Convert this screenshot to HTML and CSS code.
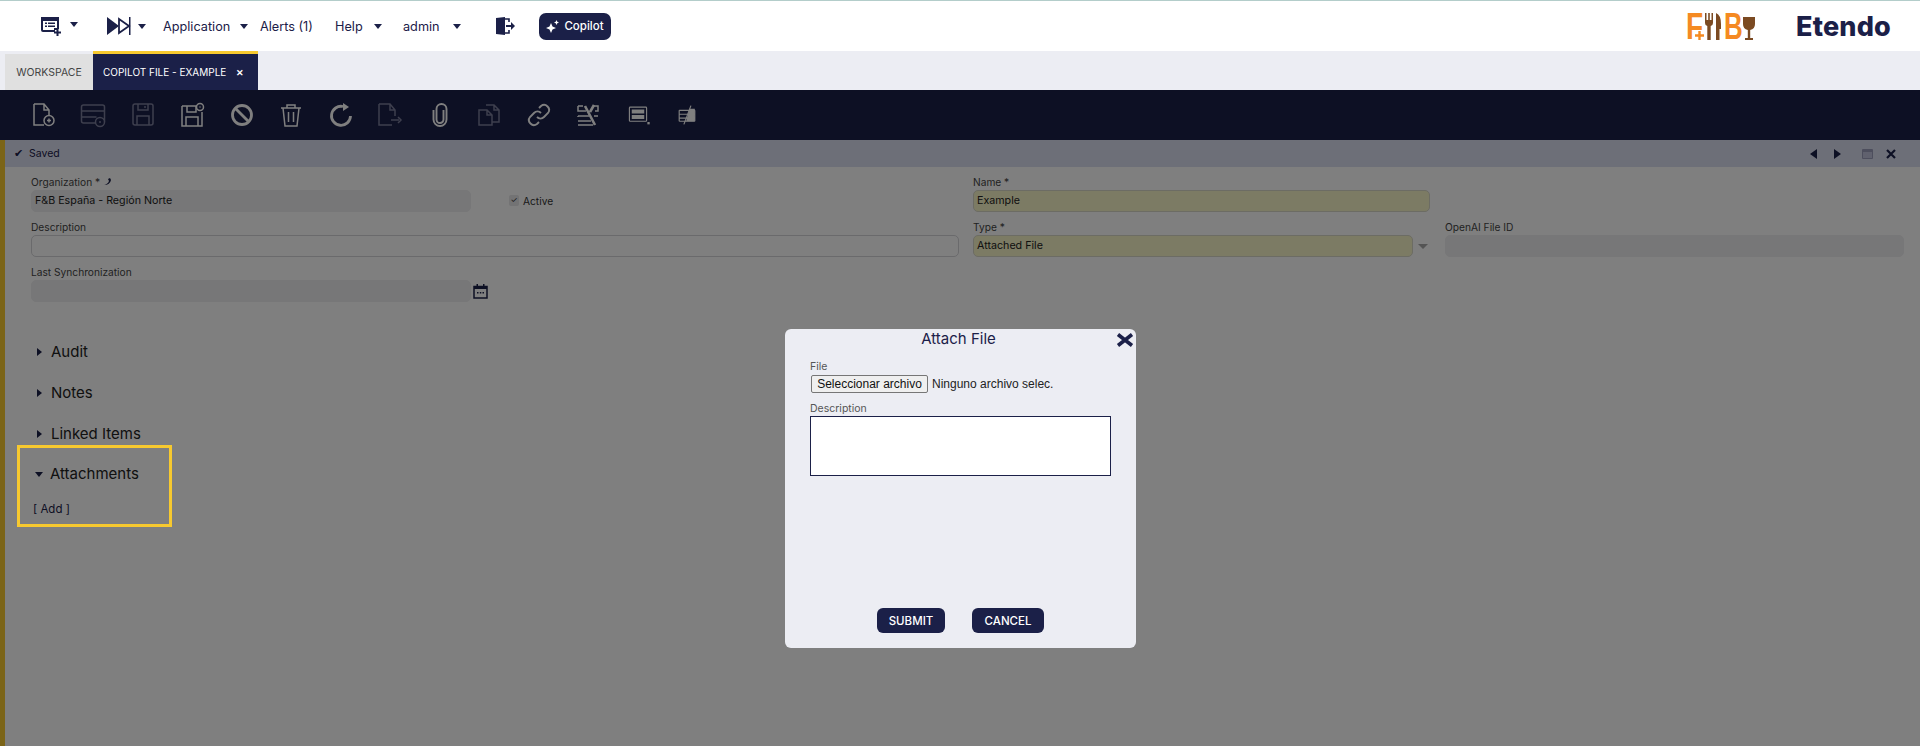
FILE: index.html

```html
<!DOCTYPE html>
<html lang="en">
<head>
  <meta charset="UTF-8">
  <title>Etendo</title>
  <link rel="stylesheet" href="styles.css">
</head>
<body>
  <header class="navbar">
    <div class="nav-left">
      <svg class="nav-icon" width="20" height="20" viewBox="0 0 20 20"><path fill="#1b2048" d="M0 1h18v12h-2v1h-2v2H2a2 2 0 0 1-2-2z"/><path fill="#fff" d="M2 5h14v7h-3v2H2z"/><path fill="#1b2048" d="M4 6.500h2v1.500H4zM7 6.500h7v1.500H7zM4 9.500h2V11H4zM7 9.500h7V11H7zM15.500 13h2v2.500H20v2h-2.500V20h-2v-2.500H13v-2h2.500z"/></svg>
      <span class="caret caret-a"></span>
      <svg class="nav-icon skip" width="24" height="18" viewBox="0 0 24 18"><path fill="#1b2048" d="M0 0l12 9-12 9z"/><path fill="none" stroke="#1b2048" stroke-width="1.800" d="M12 2l10 7-10 7z"/><path fill="#1b2048" d="M22 0h1.500v18H22z"/></svg>
      <span class="caret caret-b"></span>
      <a class="nav-link app">Application</a><span class="caret caret-c"></span>
      <a class="nav-link alerts">Alerts (1)</a>
      <a class="nav-link help">Help</a><span class="caret caret-d"></span>
      <a class="nav-link admin">admin</a><span class="caret caret-e"></span>
      <svg class="exit" width="19" height="18" viewBox="0 0 19 18"><path fill="#1b2048" d="M0 1l9-1v18l-9-1z"/><path fill="none" stroke="#1b2048" stroke-width="1.600" d="M9 2h4v3M13 13v3H9"/><path fill="#1b2048" d="M10 8h5V5l4 4-4 4v-3h-5z"/></svg>
      <button class="copilot">
        <svg width="13" height="13" viewBox="0 0 13 13"><path fill="#fff" d="M5 3l1.500 3.500L10 8 6.500 9.500 5 13 3.500 9.500 0 8l3.500-1.500zM10.500 0l.8 1.700L13 2.500l-1.700.8-.8 1.700-.8-1.700L8 2.500l1.700-.8z"/></svg>
        Copilot
      </button>
    </div>
    <div class="nav-right">
      <div class="fb-logo">
        <span class="fb-letter fb-f">F</span>
        <svg class="fb-plus" width="9" height="9" viewBox="0 0 9 9"><path fill="#f58a22" d="M3.300 0h2.400v3.300H9v2.400H5.700V9H3.300V5.700H0V3.300h3.300z"/></svg>
        <svg class="fb-cutlery" width="16" height="27" viewBox="0 0 16 27"><path fill="#7b4a22" d="M0 0h1.500v7H3.200V0h1.600v7h1.700V0H8v10q0 2.500-2.300 3V27H2.300V13Q0 12.500 0 10zM11 0q5 2 5 11v5h-1.500v11H11z"/></svg>
        <span class="fb-letter fb-b">B</span>
        <svg class="fb-glass" width="12" height="23" viewBox="0 0 12 23"><path fill="#7b4a22" d="M0 0h12v7q0 5-4.800 6v8H10v2H2v-2h2.800v-8Q0 12 0 7z"/></svg>
      </div>
      <div class="etendo">Etendo</div>
    </div>
  </header>

  <nav class="tabs">
    <div class="tab">WORKSPACE</div>
    <div class="tab active">COPILOT FILE - EXAMPLE <span class="tab-close">&#10005;</span></div>
  </nav>

  <main class="main">
    <div class="toolbar">
      <svg class="tb on" viewBox="0 0 24 24"><path d="M2 1h10l5 6v6M2 1v21h10M12 1v6h5"/><circle cx="17" cy="17.500" r="5"/><path d="M17 15.500v4M15 17.500h4"/></svg>
      <svg class="tb off" viewBox="0 0 24 24"><rect x=".5" y="2" width="23" height="18" rx="2"/><path d="M.5 8h23M.5 14h15"/><circle class="cut" cx="19" cy="19" r="4.500"/><path d="M18 19h2"/></svg>
      <svg class="tb off" viewBox="0 0 24 24"><rect x="2" y="1" width="20" height="21" rx="2"/><path d="M7 1v6h10V1M14 3v2M6 22v-9h12v9"/></svg>
      <svg class="tb on" viewBox="0 0 24 24"><path d="M2 3h15M2 3v20h20V9M7 3v6h9V3M6 23v-9h12v9"/><circle cx="20" cy="4" r="3.500"/><path d="M19.500 4h1"/></svg>
      <svg class="tb on thick" viewBox="0 0 24 24"><circle cx="12" cy="12" r="9.500"/><path d="M5.500 5.500l13 13"/></svg>
      <svg class="tb on" viewBox="0 0 24 24"><path d="M2 5h20M8 5V2h8v3M4 5l2 18h12l2-18M9.500 9v10M14.500 9v10"/></svg>
      <svg class="tb on thick" viewBox="0 0 24 24"><path d="M14 3.500A9.500 9.500 0 1 0 21.500 13"/><path class="solid" d="M14 0l6 4-6 4z"/></svg>
      <svg class="tb off" viewBox="0 0 24 24"><path d="M1 1h11l5 6v6M1 1v21h13M12 1v6h5M13 17h8M20 14l3 3-3 3"/></svg>
      <svg class="tb on wide" viewBox="0 0 24 24"><path d="M15.500 7v9.500a3.500 3.500 0 0 1-7 0V6a5 5 0 0 1 10 0v10.500a6.500 6.500 0 0 1-13 0V7"/></svg>
      <svg class="tb off" viewBox="0 0 24 24"><path d="M9 2h8l5 5v12h-7M17 2v5h5M2 7h8l5 5v10H2zM10 7v5h5"/></svg>
      <svg class="tb on wide" viewBox="0 0 24 24"><path d="M10 14a5 5 0 0 0 7 0l4-4a5 5 0 0 0-7-7l-2 2M14 10a5 5 0 0 0-7 0l-4 4a5 5 0 0 0 7 7l2-2"/></svg>
      <svg class="tb on" viewBox="0 0 24 24"><path d="M2 3h5M17 3h5v5h-3M2 3v5h8M2 13h11M18 13h4M2 13v1M2 18h13M2 22h15"/><path class="heavy" d="M9 3l10 19M18 2l-4 7"/></svg>
      <svg class="tb on small" viewBox="0 0 24 24"><rect x="1" y="2" width="22" height="18" rx="1"/><path class="solid" d="M4 5h16v5H4zM4 12h16v5H4z"/><path class="solid" d="M24 21h3v3h-3z"/></svg>
      <svg class="tb on small" viewBox="0 0 24 24"><path d="M2 6h20M2 11h20M2 16h20M2 20h20M2 6v14M22 6v14"/><path class="solid" d="M15 4h7v16h-11z"/><path d="M17 0L8 24"/></svg>
    </div>

    <div class="status">
      <div class="status-left"><span class="check">&#10004;</span> Saved</div>
      <div class="status-right">
        <span class="tri-left"></span>
        <span class="tri-right"></span>
        <svg class="win" width="11" height="10" viewBox="0 0 11 10"><rect width="11" height="10" rx="1" fill="#9a9dbb"/><rect x="1" y="3" width="9" height="6" fill="#c0c3dc"/></svg>
        <svg class="cls" width="10" height="10" viewBox="0 0 10 10"><path d="M1 1l8 8M9 1l-8 8" stroke="#1b2048" stroke-width="2.200"/></svg>
      </div>
    </div>

    <div class="form">
      <div class="form-grid">
        <div class="field col-org">
          <label>Organization * <svg width="8" height="9" viewBox="0 0 8 9"><path d="M1 8q4-1 5-4L5 2l2-1 1 2q-1 5-7 5z" fill="#1b2048"/></svg></label>
          <div class="input grey">F&amp;B España - Región Norte</div>
        </div>
        <div class="active-box"><span class="checkbox">&#10003;</span> Active</div>
        <div class="field col-name">
          <label>Name *</label>
          <div class="input required">Example</div>
        </div>
        <div class="field col-desc">
          <label>Description</label>
          <div class="input"></div>
        </div>
        <div class="field col-type">
          <label>Type *</label>
          <div class="type-row">
            <div class="input required">Attached File</div>
            <span class="select-caret"></span>
          </div>
        </div>
        <div class="field col-openai">
          <label>OpenAI File ID</label>
          <div class="input grey"></div>
        </div>
        <div class="field col-org">
          <label>Last Synchronization</label>
          <div class="date-row">
            <div class="input grey"></div>
            <svg width="15" height="16" viewBox="0 0 15 16"><path fill="none" stroke="#1b2048" stroke-width="1.500" d="M1 3.500h13V15H1z"/><path fill="#1b2048" d="M1 3h13v3H1zM3.500 1h1.500v3H3.500zM10 1h1.500v3H10zM4 9h1.500v1.500H4zM6.800 9h1.500v1.500H6.800zM9.500 9H11v1.500H9.500z"/></svg>
          </div>
        </div>
      </div>

      <section class="sections">
        <div class="section"><span class="arrow"></span>Audit</div>
        <div class="section"><span class="arrow"></span>Notes</div>
        <div class="section"><span class="arrow"></span>Linked Items</div>
        <div class="section open"><span class="arrow down"></span>Attachments</div>
        <a class="add-link">[ Add ]</a>
      </section>
    </div>

    <div class="overlay"></div>

    <!-- marker drawn over the dim layer -->
    <div class="highlight"></div>

    <div class="modal">
      <h3 class="modal-title">Attach File</h3>
      <svg class="modal-close" width="18" height="14" viewBox="0 0 18 14"><path d="M2 1.500l14 11M16 1.500l-14 11" stroke="#1b2048" stroke-width="3.600"/></svg>
      <label class="modal-label">File</label>
      <div class="file-row"><button class="file-btn">Seleccionar archivo</button><span>Ninguno archivo selec.</span></div>
      <label class="modal-label desc">Description</label>
      <div class="textarea"></div>
      <div class="modal-actions">
        <button class="btn submit">SUBMIT</button>
        <button class="btn cancel">CANCEL</button>
      </div>
    </div>
  </main>
</body>
</html>
```

FILE: styles.css

```css
* { box-sizing: border-box; }
html, body { margin: 0; height: 100%; }
body { font-family: Inter, "Open Sans", sans-serif; color: #1b2048; background: #fff; overflow: hidden; }

.navbar { height: 51px; border-top: 1px solid #b3cdca; display: flex; justify-content: space-between; align-items: center; background: #fff; }
.nav-left { display: flex; align-items: center; padding-left: 41px; }
.nav-link { font-size: 12.700px; white-space: nowrap; }
.caret { border: 4px solid transparent; border-top: 5px solid #1b2048; border-bottom: 0; width: 0; height: 0; }
.caret-a { margin-left: 9px; margin-top: -3px; }
.caret-b { margin-left: 7px; }
.caret-c { margin-left: 11px; }
.caret-d { margin-left: 12px; }
.caret-e { margin-left: 9px; }
.skip { margin-left: 29px; }
.app { margin-left: 17px; width: 66px; }
.alerts { margin-left: 12px; width: 54px; }
.help { margin-left: 21px; width: 27px; }
.admin { margin-left: 21px; width: 41px; }
.exit { margin-left: 35px; }
.copilot { margin-left: 24px; width: 72px; height: 27px; background: #1b2048; color: #fff; border: 0; border-radius: 7px; font: 500 11.500px Inter, sans-serif; display: flex; align-items: center; justify-content: center; gap: 5px; padding: 0; }

.nav-right { display: flex; align-items: center; padding-right: 29px; }
.fb-logo { display: flex; align-items: flex-start; height: 27px; width: 71px; margin-right: 39px; position: relative; }
.fb-letter { display: block; font: 700 37px/27px "Liberation Sans", sans-serif; color: #f58a22; transform-origin: left center; }
.fb-f { width: 19px; transform: scaleX(.76); }
.fb-b { width: 21px; margin-left: 3px; transform: scaleX(.7); }
.fb-plus { position: absolute; left: 9px; top: 18px; }
.fb-glass { margin-top: 4px; margin-left: -2px; }
.etendo { font: 800 27px Inter, sans-serif; color: #1b2048; letter-spacing: .2px; }

.tabs { height: 39px; background: #ecedf3; display: flex; align-items: flex-end; padding-left: 5px; }
.tab { height: 36px; width: 88px; background: #e0e0e0; color: #444; font-size: 10.500px; display: flex; align-items: center; justify-content: center; }
.tab.active { height: 39px; width: 165px; background: #1b2048; color: #fff; border-top: 3px solid #f7c92f; justify-content: flex-start; padding-left: 10px; font-size: 10px; white-space: nowrap; }
.tab-close { font-size: 9px; font-weight: 700; margin-left: 10px; }

.main { position: relative; height: 656px; }
.toolbar { height: 50px; background: #1b2048; display: flex; align-items: center; padding-left: 31.500px; gap: 25.500px; }
.tb { width: 24px; height: 24px; fill: none; stroke: #fff; stroke-width: 1.500; flex: none; overflow: visible; }
.tb.off { stroke: #7c7f9c; }
.tb.thick { stroke-width: 2.800; }
.tb.wide { stroke-width: 1.900; }
.tb.small { transform: scale(.78); }
.tb .solid { fill: #fff; stroke: none; }
.tb .heavy { stroke-width: 2.600; }
.tb .cut { fill: #1b2048; }

.status { height: 27px; background: #dadef0; border-left: 5px solid #f7c92f; display: flex; justify-content: space-between; align-items: center; padding: 0 24px 2px 9px; font-size: 10.500px; }
.check { font-size: 11px; margin-right: 3px; }
.status-right { display: flex; align-items: center; margin-top: 2px; }
.tri-left { border: 5px solid transparent; border-right: 7px solid #1b2048; border-left: 0; }
.tri-right { border: 5px solid transparent; border-left: 7px solid #1b2048; border-right: 0; margin-left: 17px; }
.win { margin-left: 21px; }
.cls { margin-left: 13px; }

.form { height: 579px; background: #fff; border-left: 5px solid #f7c92f; color: #333; }
.form-grid { display: grid; grid-template-columns: 440px 40px 448px 14px 440px 32px 459px; padding: 8px 0 0 26px; row-gap: 8px; position: relative; }
.field label { display: block; font-size: 10.200px; height: 15px; line-height: 15px; color: #444; }
.col-org { grid-column: 1 / span 1; }
.col-name { grid-column: 5 / span 2; margin-right: 15px; }
.col-desc { grid-column: 1 / span 3; }
.col-type { grid-column: 5 / span 2; }
.col-openai { grid-column: 7; }
.active-box { grid-column: 2 / span 2; font-size: 10.200px; padding: 20px 0 0 38px; display: flex; gap: 4px; }
.checkbox { font-size: 8px; width: 10px; height: 11px; line-height: 11px; text-align: center; background: #e6e6e8; border-radius: 2px; }
.input { height: 22px; border: 1px solid #d4d4d8; border-radius: 5px; background: #fff; font-size: 10.700px; line-height: 20px; padding-left: 3px; color: #222; }
.input.grey { background: #eeeef0; border-color: #eeeef0; }
.input.required { background: #f9f6c8; border-color: #d8d8c8; }
.type-row, .date-row { display: flex; align-items: center; }
.type-row .input { width: 440px; }
.select-caret { border: 5px solid transparent; border-top: 5px solid #a8a8a8; border-bottom: 0; margin-left: 5px; }
.date-row .input { width: 440px; }
.date-row svg { margin-left: 2px; }
.date-row { width: 460px; }

.sections { padding: 30px 0 0 12px; }
.section { font-size: 15px; height: 41px; line-height: 20px; padding-top: 10px; display: flex; color: #222; }
.section.open { margin-top: -1px; }
.arrow { border: 4px solid transparent; border-left: 5px solid #1b2048; border-right: 0; width: 0; height: 0; margin: 6px 9px 0 20px; }
.arrow.down { border: 4px solid transparent; border-top: 5px solid #1b2048; border-bottom: 0; margin: 8px 7px 0 18px; }
.add-link { display: block; font-size: 11.500px; padding-left: 16px; margin-top: 7px; color: #1b2048; }

/* dim layer under the popup */
.overlay { position: absolute; inset: 0; background: rgba(0, 0, 0, .5); }
.highlight { position: absolute; left: 17px; top: 355px; width: 155px; height: 82px; border: 3px solid #f7c92f; }

.modal { position: absolute; left: 785px; top: 239px; width: 351px; height: 319px; background: #ecedf3; border-radius: 6px; padding: 0 25px; }
.modal-title { margin: 0; padding-right: 4px; font-size: 15px; font-weight: 400; text-align: center; line-height: 20px; }
.modal-close { position: absolute; right: 2px; top: 4px; }
.modal-label { display: block; font-size: 10.500px; color: #555; margin-top: 11px; height: 15px; line-height: 14px; }
.modal-label.desc { margin-top: 9px; height: 14px; }
.file-row { display: flex; align-items: center; font: 12px "Liberation Sans", sans-serif; color: #222; gap: 4px; margin-left: 1px; }
.file-btn { width: 117px; height: 18px; padding: 0; font: 12px "Liberation Sans", sans-serif; color: #111; background: #efefef; border: 1px solid #767676; border-radius: 2px; line-height: 14px; white-space: nowrap; }
.textarea { height: 60px; width: 301px; background: #fff; border: 1px solid #1b2048; }
.modal-actions { position: absolute; left: 92px; top: 279px; display: flex; gap: 27px; }
.btn { height: 25px; background: #1b2048; color: #fff; border: 0; border-radius: 6px; font: 500 11.500px Inter, sans-serif; padding: 0; }
.submit { width: 68px; }
.cancel { width: 72px; }
```
